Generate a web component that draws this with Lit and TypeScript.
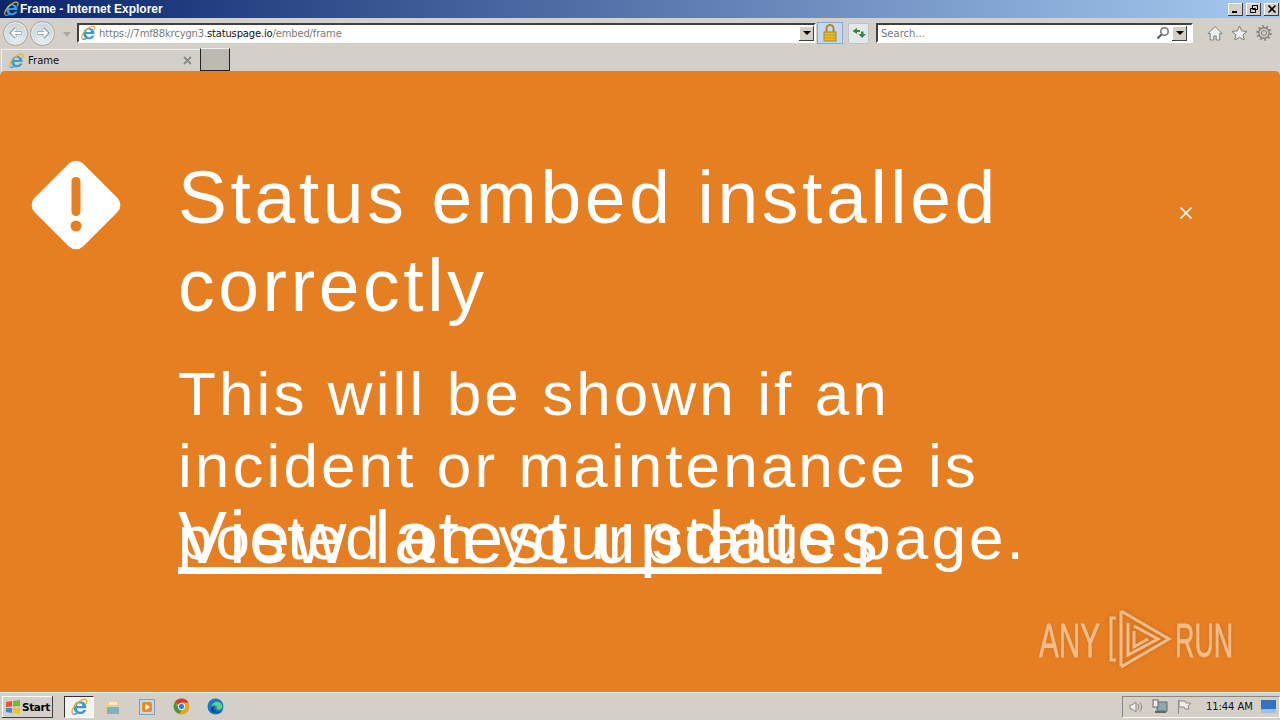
import { LitElement, html, css } from "lit";
import { customElement } from "lit/decorators.js";

const ie = (s: number) => html`<svg width=${s} height=${s} viewBox="0 0 16 16" class="ic">
  <path d="M14.300 9H6.100c.1 2 1.400 3.200 3 3.200 1.200 0 2.200-.6 2.700-1.600h2.700c-.8 2.300-3 3.700-5.500 3.700-3.300 0-5.700-2.500-5.700-5.600 0-3.200 2.400-5.800 5.700-5.800 3.300 0 5.500 2.500 5.500 5.300 0 .3-.1.5-.2.800zM6.200 7h4.900C11 5.500 10 4.600 8.700 4.600 7.400 4.600 6.400 5.500 6.200 7z" fill="#3a9ad8"/>
  <path d="M2.200 13.600C.8 12.300 2.700 7.800 6.500 4.600 10 1.700 13.400.6 14.600 1.700c.8.800.4 2.300-.5 3.800" fill="none" stroke="#e8b020" stroke-width="1.200"/>
  <path d="M2.200 13.600c.7.900 2.300.8 4 0" fill="none" stroke="#3f9ad0" stroke-width="1.200"/>
</svg>`;

const arrow = (dir: number) => html`<span class="nav"><svg width="16" height="16" viewBox="0 0 16 16">
  <path d=${dir < 0 ? "M13.500 8H4M8 3.500 3.500 8 8 12.500" : "M2.500 8H12M8 3.500 12.500 8 8 12.500"} fill="none" stroke="#8c9aa4" stroke-width="3.400"/>
  <path d=${dir < 0 ? "M13 8H4M8 4 4 8l4 4" : "M3 8h9M8 4l4 4-4 4"} fill="none" stroke="#fff" stroke-width="1.800"/>
</svg></span>`;

const dd = html`<span class="dd"><i></i></span>`;

@customElement("app-root")
export class AppRoot extends LitElement {
  static styles = css`
    :host { display: block; width: 1280px; height: 720px; overflow: hidden; background: #d4d0c8; font-family: "Liberation Sans", Arial, sans-serif; }
    .win { display: flex; flex-direction: column; height: 720px; }
    .title { height: 18px; display: flex; align-items: center; background: linear-gradient(90deg, #0a246a 0%, #a6caf0 100%); color: #fff; font: bold 12px "Liberation Sans", sans-serif; padding: 0 1px 0 3px; flex: none; }
    .title .t { flex: 1; margin-left: 1px; }
    .wb { width: 15px; height: 13px; background: #d4d0c8; box-shadow: inset -1px -1px #404040, inset 1px 1px #fff; display: flex; align-items: center; justify-content: center; margin-left: 3px; }
    .ic { display: block; flex: none; }
    .tb { height: 28px; box-sizing: border-box; padding: 2px 0 0 3px; flex: none; display: flex; align-items: center; }
    .nav { width: 25px; height: 25px; box-sizing: border-box; border-radius: 50%; border: 1px solid #a8a69e; background: radial-gradient(circle at 50% 75%, #e6eef0, #c2ced4); box-shadow: inset 0 0 0 1px #eef0f0; display: flex; align-items: center; justify-content: center; margin-right: 2px; }
    .navd { width: 0; height: 0; border-left: 4px solid transparent; border-right: 4px solid transparent; border-top: 5px solid #a8a8a0; margin: 2px 6px 0 6px; }
    .addr { width: 739px; height: 20px; box-sizing: border-box; background: #fff; border: 2px solid; border-color: #404040 #fff #fff #404040; display: flex; align-items: center; font: 10px "DejaVu Sans", sans-serif; letter-spacing: -.17px; color: #7a7a7a; padding-left: 1px; gap: 3px; }
    .addr .u { flex: 1; white-space: nowrap; }
    .addr b { font-weight: 400; color: #111; }
    .dd { width: 15px; height: 15px; box-sizing: border-box; background: #d4d0c8; box-shadow: inset -1px -1px #404040, inset 1px 1px #fff; display: flex; align-items: center; justify-content: center; flex: none; }
    .dd i { width: 0; height: 0; border-left: 4px solid transparent; border-right: 4px solid transparent; border-top: 4px solid #000; }
    .lock { width: 26px; height: 22px; box-sizing: border-box; margin-left: 1px; background: #c4d8f4; border: 1px solid #8aa8d4; display: flex; align-items: center; justify-content: center; }
    .ref { width: 21px; height: 21px; margin-left: 5px; box-sizing: border-box; background: #e4e8ec; border: 1px solid #c0c4c8; border-radius: 2px; display: flex; align-items: center; justify-content: center; }
    .search { width: 317px; height: 20px; margin-left: 7px; box-sizing: border-box; background: #fff; border: 2px solid; border-color: #404040 #fff #fff #404040; display: flex; align-items: center; font: 10px "DejaVu Sans", sans-serif; color: #777; padding-left: 3px; }
    .search .st { flex: 1; }
    .search svg { margin-right: 2px; }
    .search .dd { margin-right: 4px; }
    .tools { display: flex; margin-left: 14px; gap: 8px; }
    .tabs { height: 25px; flex: none; display: flex; padding-left: 1px; align-items: flex-start; }
    .tab { width: 199px; height: 22px; margin-top: 3px; box-sizing: border-box; display: flex; align-items: center; gap: 4px; padding: 0 8px 0 6px; font: 10px "DejaVu Sans", sans-serif; color: #111; border-top: 1px solid #f2f0ea; border-left: 1px solid #f2f0ea; }
    .tab span { flex: 1; }
    .new { width: 30px; height: 23px; margin-top: 2px; box-sizing: border-box; background: #bdb9b3; border: 1px solid; border-color: #eee #222 #222 #222; }
    .banner { position: relative; flex: none; height: 621px; box-sizing: border-box; background: #e67e22; border-radius: 5px 5px 0 0; color: #fff; display: flex; padding: 83px 0 0 31px; }
    .icon { width: 90px; height: 90px; margin: 6px 57px 0 0; flex: none; }
    .text { width: 900px; flex: none; }
    h1 { margin: 0 0 28px; font-size: 73.2px; line-height: 88px; font-weight: 400; letter-spacing: 3.660px; }
    p { margin: 0; height: 144px; font-size: 62px; line-height: 72px; letter-spacing: 3.100px; }
    a { display: inline-block; color: #fff; font-size: 73.2px; line-height: 72px; letter-spacing: 3.700px; text-decoration: underline; text-decoration-skip-ink: none; }
    .close { position: absolute; left: 1179px; top: 135px; }
    .logo { position: absolute; left: 1039px; top: 538px; display: flex; align-items: center; color: #f2bd8a; }
    .logo span { font: 400 48px "Liberation Sans", sans-serif; display: inline-block; -webkit-text-stroke: .8px #f2bd8a; text-shadow: 0 0 3px rgba(150,80,20,.45); }
    .l1 { transform: scaleX(.62); transform-origin: left center; width: 66px; }
    .l2 { transform: scaleX(.56); transform-origin: left center; width: 60px; }
    .logo svg { margin: 0 3px 0 3px; filter: drop-shadow(0 0 2px rgba(150,80,20,.4)); }
    .task { flex: 1; display: flex; align-items: center; padding-left: 2px; border-top: 1px solid #eee; }
    .start { width: 51px; height: 22px; box-sizing: border-box; background: #d4d0c8; box-shadow: inset -1px -1px #404040, inset 1px 1px #fff; font: bold 10.5px "DejaVu Sans", sans-serif; letter-spacing: -.4px; display: flex; align-items: center; padding-left: 3px; gap: 1px; color: #000; }
    .ql { display: flex; align-items: center; margin-left: 11px; flex: 1; }
    .act { width: 30px; height: 22px; margin-right: 2px; box-sizing: border-box; border: 1px solid; border-color: #333 #fff #fff #333; background: #f4f2ee; display: flex; align-items: center; justify-content: center; }
    .slot { width: 34px; display: flex; justify-content: center; flex: none; }
    .tray { width: 158px; height: 22px; box-sizing: border-box; border: 1px solid; border-color: #888 #fff #fff #888; display: flex; align-items: center; padding-left: 5px; gap: 8px; font: 10px "DejaVu Sans", sans-serif; letter-spacing: -.1px; color: #111; }
    .clock { margin-left: 6px; white-space: nowrap; }
  `;

  render() {
    return html`<div class="win">
      <div class="title">
        ${ie(16)}<span class="t">Frame - Internet Explorer</span>
        <span class="wb"><svg width="10" height="10"><path d="M1 8h5" stroke="#000" stroke-width="2"/></svg></span>
        <span class="wb"><svg width="10" height="10"><path d="M3.500 1.500h5v4h-5zM1.500 4.500h5v4h-5z" fill="#d4d0c8" stroke="#000"/></svg></span>
        <span class="wb"><svg width="10" height="10"><path d="M1.500 1.500l7 7M8.500 1.500l-7 7" stroke="#000" stroke-width="1.600"/></svg></span>
      </div>
      <div class="tb">
        ${arrow(-1)}${arrow(1)}<i class="navd"></i>
        <div class="addr">
          ${ie(16)}<span class="u">https://7mf88krcygn3.<b>statuspage.io</b>/embed/frame</span>${dd}
        </div>
        <span class="lock"><svg width="14" height="18" viewBox="0 0 14 18"><path d="M3.500 9V4.500a3.500 3.500 0 0 1 7 0V9" fill="none" stroke="#b08a20" stroke-width="2"/><rect x="1" y="8" width="12" height="9" fill="#eab92d" stroke="#a88414"/><path d="M2 11h10M2 14h10" stroke="#c49a20"/></svg></span>
        <span class="ref"><svg width="16" height="14" viewBox="0 0 16 14"><path d="M6 2 1.500 5 6 8V6h3V4H6zM11 12l4-4h-2.500V5.500h-2.500V8H7.500z" fill="#2e8a38"/></svg></span>
        <div class="search"><span class="st">Search...</span>
          <svg width="14" height="14" viewBox="0 0 14 14"><circle cx="8.500" cy="5.500" r="3.700" fill="none" stroke="#777" stroke-width="1.600"/><path d="M5.500 8.500 1.500 12.500" stroke="#555" stroke-width="2"/></svg>
          ${dd}
        </div>
        <div class="tools">
          <svg width="16" height="16" viewBox="0 0 16 16"><path d="M8 1.500 1 8.500h2.200V15h3.600v-4h2.400v4h3.600V8.500H15z" fill="#eee" stroke="#7f7f7a"/></svg>
          <svg width="17" height="16" viewBox="0 0 17 16"><path d="M8.500 1l2.200 4.900 5.300.5-4 3.500 1.200 5.100-4.700-2.700L3.800 15 5 9.900 1 6.400l5.300-.5z" fill="#eee" stroke="#7f7f7a"/></svg>
          <svg width="16" height="16" viewBox="0 0 16 16"><circle cx="8" cy="8" r="2.500" fill="none" stroke="#7f7f7a"/><circle cx="8" cy="8" r="5.200" fill="none" stroke="#7f7f7a" stroke-width="1.400"/><circle cx="8" cy="8" r="6.800" fill="none" stroke="#8a8a85" stroke-width="2" stroke-dasharray="2 2.270"/></svg>
        </div>
      </div>
      <div class="tabs">
        <div class="tab">${ie(16)}<span>Frame</span>
          <svg width="9" height="9"><path d="M1 1l7 7M8 1 1 8" stroke="#8a8a85" stroke-width="1.800"/></svg>
        </div>
        <div class="new"></div>
      </div>
      <div class="banner">
        <svg class="icon" viewBox="0 0 90 90">
          <path d="M38 3.500a10 10 0 0 1 14 0l34.500 34.500a10 10 0 0 1 0 14L52 86.500a10 10 0 0 1-14 0L3.500 52a10 10 0 0 1 0-14z" fill="#fff"/>
          <rect x="40.500" y="17" width="9" height="39" rx="4.500" fill="#e67e22"/>
          <circle cx="45" cy="66" r="5.500" fill="#e67e22"/>
        </svg>
        <div class="text">
          <h1>Status embed installed correctly</h1>
          <p>This will be shown if an incident or maintenance is posted on your status page.</p>
          <a href="#">View latest updates</a>
        </div>
        <svg class="close" width="14" height="14" viewBox="0 0 14 14"><path d="M1.500 1.500l11 11M12.500 1.500l-11 11" stroke="#fff" stroke-width="1.700"/></svg>
        <div class="logo">
          <span class="l1">ANY</span>
          <svg width="64" height="62" viewBox="0 0 64 62" fill="none" stroke="#f2bd8a" stroke-width="3">
            <path d="M8 9H3v42h5M13 2v55M13 2l48 28-48 28M20 14v32l30-16-24-13M26 22v16l14-8"/>
          </svg>
          <span class="l2">RUN</span>
        </div>
      </div>
      <div class="task">
        <div class="start">
          <svg width="16" height="14" viewBox="0 0 16 14"><path d="M1 2l6-1v5.500L1 7z" fill="#e8552a"/><path d="M8 1l7-1v6l-7 .500z" fill="#7cb342"/><path d="M1 8h6v5l-6-1z" fill="#3a8ad8"/><path d="M8 8h7v6l-7-1z" fill="#f4c020"/></svg>Start
        </div>
        <div class="ql">
          <span class="act">${ie(18)}</span>
          <span class="slot"><svg width="16" height="16" viewBox="0 0 16 16"><path d="M1 4h5l1-2h7v12H1z" fill="#e9cf85"/><path d="M2 8h12v7H2z" fill="#7fb0c4"/><path d="M4 3h8v3H4z" fill="#f6ecc8"/></svg></span>
          <span class="slot"><svg width="16" height="16" viewBox="0 0 16 16"><rect x=".5" y=".5" width="15" height="15" fill="#c9d6e8" stroke="#7f9cc4"/><rect x="3" y="3" width="10" height="10" rx="2" fill="#f08a20"/><path d="M6.500 5v6l4.500-3z" fill="#fff"/></svg></span>
          <span class="slot"><svg width="17" height="17" viewBox="0 0 17 17"><circle cx="8.500" cy="8.500" r="8" fill="#e0a820"/><path d="M8.500.500a8 8 0 0 1 7 4H8.500a4 4 0 0 0-3.600 2.200L1.900 4A8 8 0 0 1 8.500.500z" fill="#d8382c"/><path d="M1.900 4l3 5.200a4 4 0 0 0 3.600 3.300l-2.200 3.400A8 8 0 0 1 1.900 4z" fill="#3a9a48"/><circle cx="8.500" cy="8.500" r="3.200" fill="#3a78d8" stroke="#fff"/></svg></span>
          <span class="slot"><svg width="17" height="17" viewBox="0 0 17 17"><circle cx="8.500" cy="8.500" r="8" fill="#1578c4"/><path d="M5 11a5 5 0 0 1 10-4c1.500 3-1 5-3 4.500C9 12 9 9 10.500 8.500 8 7 5.500 8.500 5 11z" fill="#5fd08a"/><path d="M4 13c3 3 8 3 11 .5-3 1-7 .5-8-2.500-.5-1 0-3 1-4-3 1-5 3-4 6z" fill="#0d4d92"/></svg></span>
        </div>
        <div class="tray">
          <svg width="16" height="16" viewBox="0 0 16 16" fill="none" stroke="#8a8a85"><path d="M2 6h2l4-3v10l-4-3H2z" fill="#eee"/><path d="M10 5q2 3 0 6M12 3.500q3.500 4.500 0 9"/></svg>
          <svg width="16" height="16" viewBox="0 0 16 16"><rect x="5" y="3" width="10" height="9" fill="#8aa8b8" stroke="#666"/><rect x="1" y="1" width="5" height="7" fill="#eee" stroke="#666"/><path d="M3 13h11" stroke="#666" stroke-width="2"/></svg>
          <svg width="16" height="16" viewBox="0 0 16 16" fill="#eee" stroke="#8a8a85"><path d="M2.500 1v14M3 2h6l1 2h5l-3 3 1 3H9L8 8H3z"/></svg>
          <span class="clock">11:44 AM</span>
          <svg width="15" height="13" viewBox="0 0 15 13"><rect width="15" height="13" fill="#2f73c4"/><rect y="9" width="15" height="4" fill="#9cc0e4"/></svg>
        </div>
      </div>
    </div>`;
  }
}
